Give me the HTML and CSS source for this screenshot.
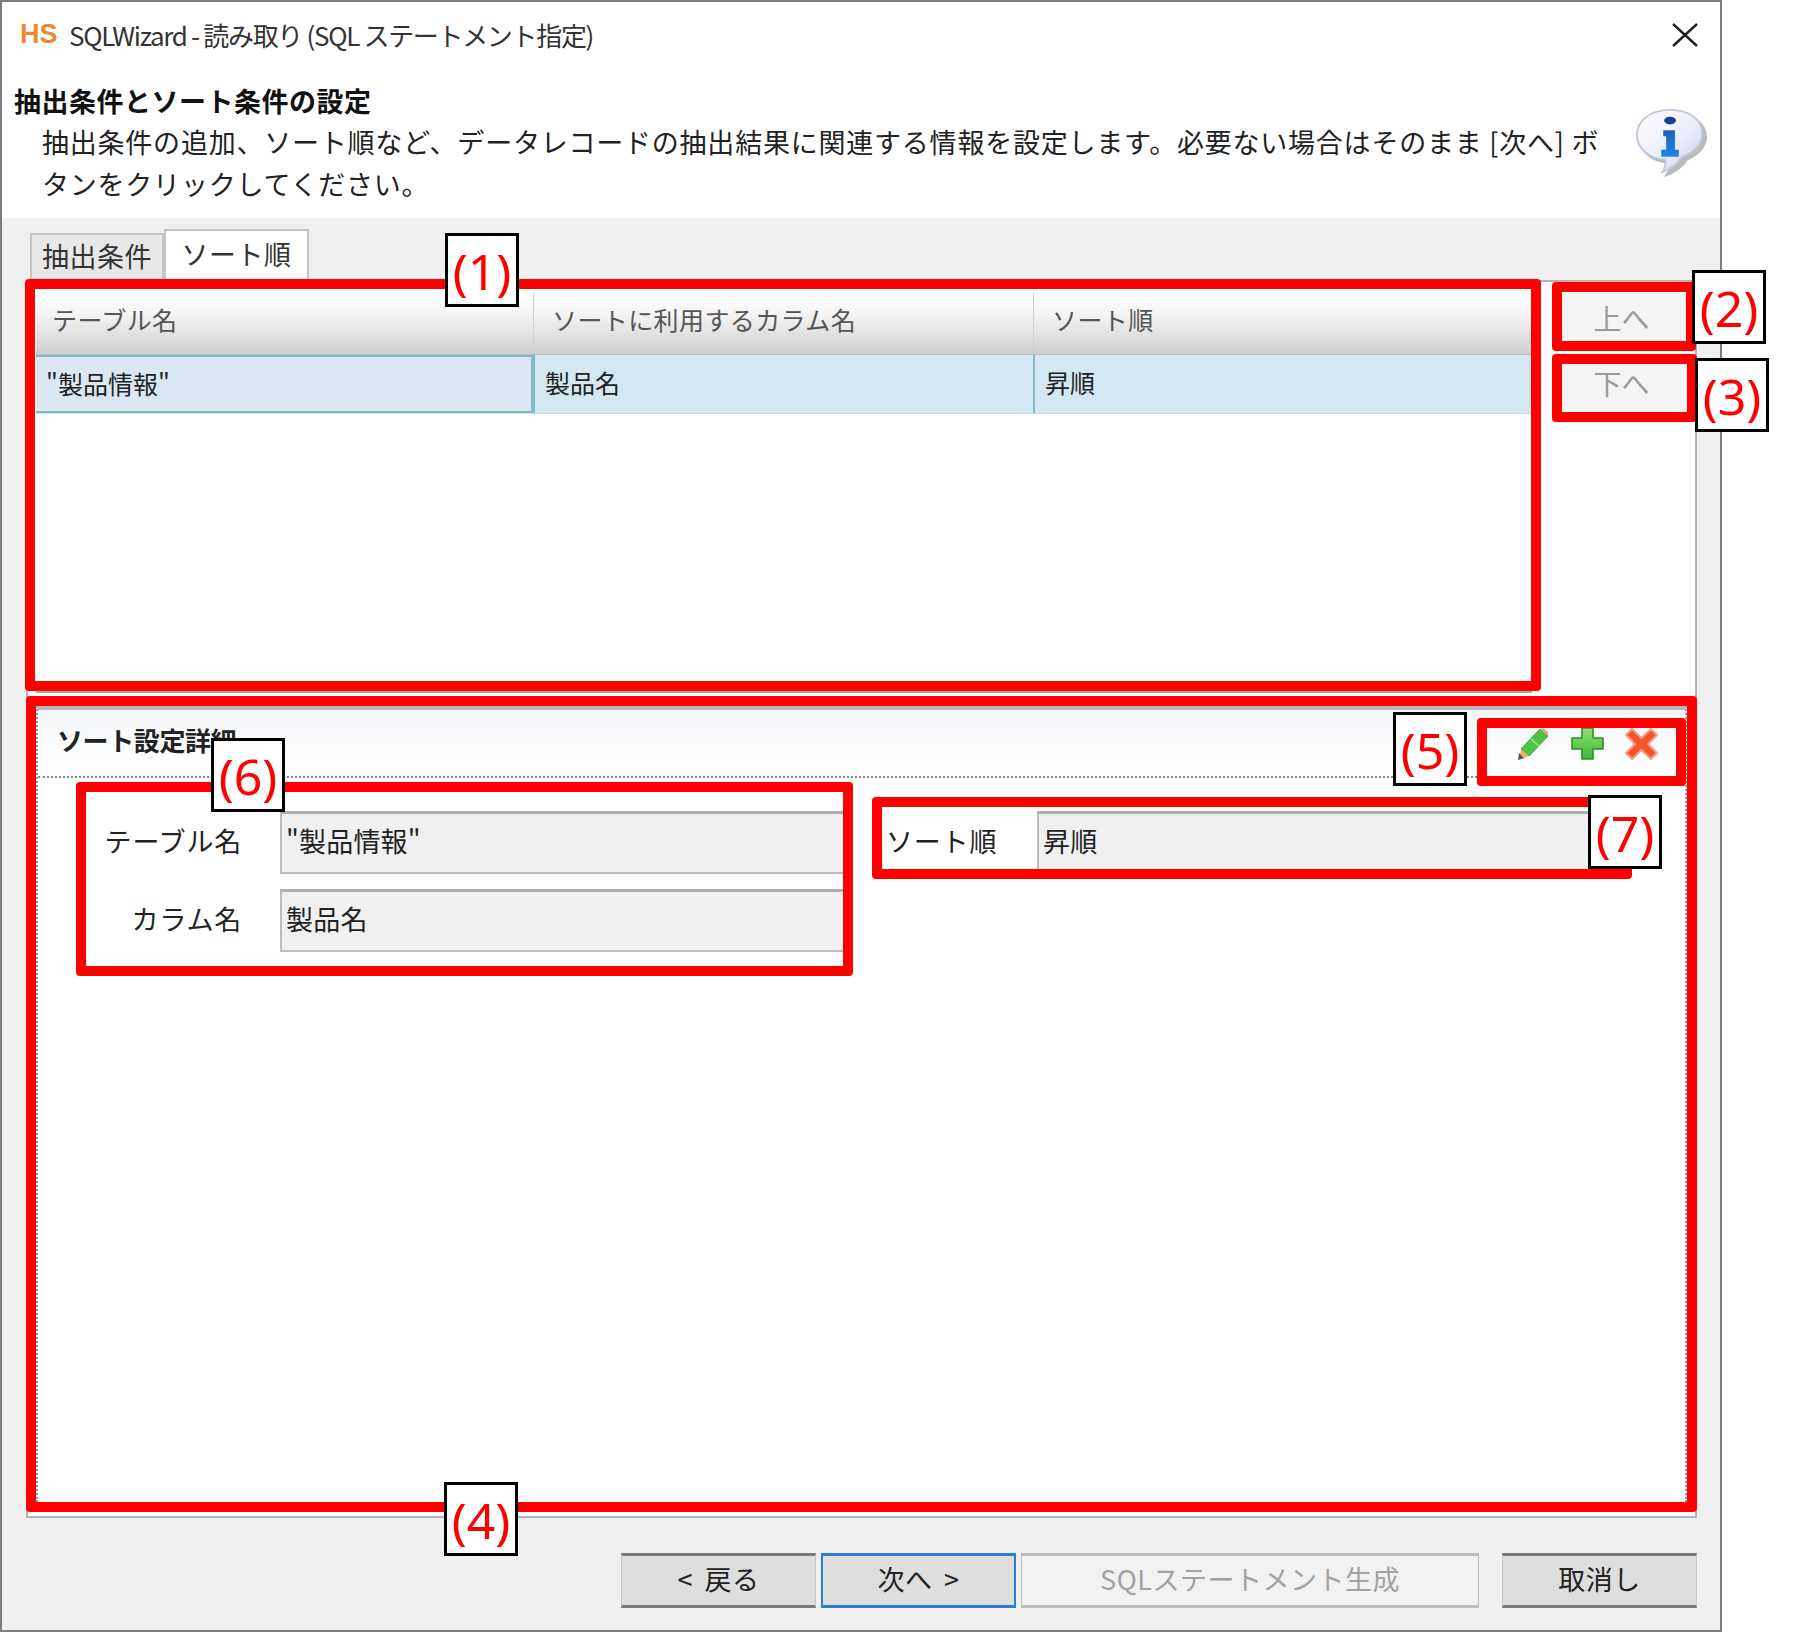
FILE: index.html
```html
<!DOCTYPE html>
<html lang="ja">
<head>
<meta charset="utf-8">
<title>SQLWizard</title>
<link rel="stylesheet" href="styles.css">
</head>
<body>
<div class="stage">
  <div class="window">
    <div class="titlebar">
      <span class="logo">HS</span>
      <span class="title">SQLWizard - 読み取り (SQL ステートメント指定)</span>
      <svg class="close" viewBox="0 0 26 24"><path d="M1 1L25 23M25 1L1 23" stroke="#222" stroke-width="2.4" fill="none"/></svg>
    </div>
    <div class="head">
      <div class="head-text">
        <div class="heading">抽出条件とソート条件の設定</div>
        <div class="desc">抽出条件の追加、ソート順など、データレコードの抽出結果に関連する情報を設定します。必要ない場合はそのまま [次へ] ボタンをクリックしてください。</div>
      </div>
      <svg class="info" viewBox="0 0 76 72">
        <defs>
          <linearGradient id="bub" x1="0" y1="0" x2="1" y2="1"><stop offset="0" stop-color="#ffffff"/><stop offset=".6" stop-color="#e9ebfa"/><stop offset="1" stop-color="#c8ccf0"/></linearGradient>
          <linearGradient id="ib" x1="0" y1="0" x2="0" y2="1"><stop offset="0" stop-color="#1c5fb8"/><stop offset="1" stop-color="#1e86e8"/></linearGradient>
        </defs>
        <path d="M38 4C17 4 3 15 3 30c0 14 13 25 30 26 1 5-1 10-5 14 9-2 19-8 25-17 10-5 20-13 20-24C73 14 59 4 38 4z" fill="#8c8c8c" opacity=".6" transform="translate(1 1)"/>
        <path d="M36 2C16 2 2 13 2 28c0 14 13 24 29 25 1 5 0 9-3 13 8-3 16-9 21-16 11-4 20-12 20-23C69 12 56 2 36 2z" fill="url(#bub)" stroke="#c4c7d4" stroke-width="2"/>
        <ellipse cx="36" cy="13" rx="6" ry="4" fill="#123f97"/>
        <path d="M29 23h12v20h4v7H27v-7h5V29h-3z" fill="url(#ib)"/>
      </svg>
    </div>
    <div class="body">
      <div class="tabs">
        <div class="tab">抽出条件</div>
        <div class="tab tab-active">ソート順</div>
      </div>
      <div class="tabpage">
        <div class="top-row">
          <div class="grid">
            <div class="grid-head">
              <div class="hcell">テーブル名</div>
              <div class="hcell">ソートに利用するカラム名</div>
              <div class="hcell">ソート順</div>
            </div>
            <div class="grid-row">
              <div class="cell cell-first">"製品情報"</div>
              <div class="cell">製品名</div>
              <div class="cell">昇順</div>
            </div>
          </div>
          <div class="move-btns">
            <div class="move-btn">上へ</div>
            <div class="move-btn move-btn-down">下へ</div>
          </div>
        </div>
        <div class="detail">
          <div class="detail-head">
            <span class="detail-title">ソート設定詳細</span>
            <div class="tools">
              <svg class="tool" viewBox="0 0 33 33">
                <path d="M23 2l8 7-19 20-8-7z" fill="#4cc444" stroke="#3a9a34" stroke-width="1"/>
                <path d="M14 12l8 7" stroke="#8ae07e" stroke-width="2" fill="none"/>
                <path d="M23 2l3-1 5 4v4z" fill="#f0a090"/>
                <path d="M4 22l8 7-10 4z" fill="#f0b070"/>
                <path d="M1 33l1-7 5 5z" fill="#555"/>
              </svg>
              <svg class="tool" viewBox="0 0 33 33">
                <defs><linearGradient id="pl" x1="0" y1="0" x2="0" y2="1"><stop offset="0" stop-color="#90e070"/><stop offset="1" stop-color="#3cb838"/></linearGradient></defs>
                <path d="M11 1h11v10h10v11H22v10H11V22H1V11h10z" fill="url(#pl)" stroke="#2d8f2d" stroke-width="1.6" stroke-linejoin="round"/>
              </svg>
              <svg class="tool" viewBox="0 0 33 33">
                <path d="M7 2l9.500 9L26 2l6 6-9 9 9 9-6 6-9.500-9L7 32l-6-6 9-9-9-9z" fill="#f4562a" stroke="#f0a08a" stroke-width="2" stroke-linejoin="round"/>
              </svg>
            </div>
          </div>
          <div class="form">
            <div class="form-label">テーブル名</div>
            <div class="field">"製品情報"</div>
            <div class="form-label form-label-left">ソート順</div>
            <div class="field">昇順</div>
            <div class="form-label">カラム名</div>
            <div class="field">製品名</div>
          </div>
        </div>
      </div>
      <div class="footer">
        <div class="btn">&lt; 戻る</div>
        <div class="btn btn-default">次へ &gt;</div>
        <div class="btn btn-disabled">SQLステートメント生成</div>
        <div class="btn btn-cancel">取消し</div>
      </div>
    </div>
  </div>

  <div class="mark mark-1"></div>
  <div class="mark mark-2"></div>
  <div class="mark mark-3"></div>
  <div class="mark mark-4"></div>
  <div class="mark mark-5"></div>
  <div class="mark mark-6"></div>
  <div class="mark mark-7"></div>
  <div class="tag tag-1">(1)</div>
  <div class="tag tag-2">(2)</div>
  <div class="tag tag-3">(3)</div>
  <div class="tag tag-4">(4)</div>
  <div class="tag tag-5">(5)</div>
  <div class="tag tag-6">(6)</div>
  <div class="tag tag-7">(7)</div>
</div>
</body>
</html>
```
FILE: styles.css
```css
* { box-sizing: border-box; }
html, body { margin: 0; padding: 0; background: #fff; }
body { font-family: "Noto Sans CJK JP", "Noto Sans", sans-serif; color: #222; font-size: 27px; }
.stage { position: relative; width: 1797px; height: 1633px; overflow: hidden; }

.window { width: 1722px; height: 1632px; border: 2px solid #7d7d7d; display: flex; flex-direction: column; background: #fff; }

.titlebar { height: 66px; display: flex; align-items: center; padding-left: 18px; padding-right: 22px; flex: none; }
.logo { font-family: "Liberation Sans", sans-serif; font-weight: 700; font-size: 27px; color: #ee8a2d; width: 49px; flex: none; padding-bottom: 2px; }
.title { font-size: 26px; color: #333; flex: 1; letter-spacing: -1.32px; padding-bottom: 2px; }
.close { width: 26px; height: 24px; flex: none; }

.head { height: 150px; flex: none; display: flex; padding-top: 14px; padding-left: 12px; position: relative; }
.head-text { width: 1600px; flex: none; }
.heading { font-weight: 700; line-height: 38px; font-size: 27px; color: #111; letter-spacing: 0.5px; }
.desc { padding-left: 28px; line-height: 42px; font-size: 27px; color: #222; letter-spacing: 0.78px; padding-top: 1px; }
.info { width: 74px; height: 72px; flex: none; margin-left: 21px; margin-top: 25px; }

.body { flex: 1; background: #f0f0f0; padding: 11px 23px 0 24px; display: flex; flex-direction: column; }
.tabs { display: flex; height: 51px; padding-left: 4px; align-items: flex-end; flex: none; }
.tab { width: 134px; height: 47px; background: #e8e8e8; border: 2px solid #c4c4c4; border-bottom: 0; text-align: center; line-height: 42px; font-size: 27px; color: #333; letter-spacing: 0.5px; }
.tab-active { width: 145px; height: 51px; background: #fff; line-height: 46px; }

.tabpage { height: 1238px; flex: none; background: #fff; border: 2px solid #b4b4b4; padding: 11px 8px 14px 8px; display: flex; flex-direction: column; }
.top-row { display: flex; height: 400px; flex: none; gap: 24px; }
.grid { flex: 1; border-bottom: 3px solid #a8a8a8; background: #fff; }
.grid-head { display: grid; grid-template-columns: 497px 500px 1fr; height: 62px; background: linear-gradient(#ffffff, #f4f4f4 35%, #cfcfcf); border-bottom: 1px solid #bbb; }
.hcell { padding-left: 18px; line-height: 52px; font-size: 25px; color: #555; border-left: 1px solid #d0d0d0; letter-spacing: 0.4px; }
.hcell:first-child { padding-left: 16px; border-left: 0; }
.grid-row { display: grid; grid-template-columns: 497px 500px 1fr; height: 59px; background: #d4e8f2; border-bottom: 1px solid #c6dfec; }
.cell { padding-left: 10px; line-height: 54px; font-size: 25px; color: #222; border-left: 2px solid #7fbace; }
.cell-first { background: #dbe7f3; border: 2px solid #7fbace; border-left: 0; padding-left: 10px; line-height: 52px; }
.cell:last-child { border-left: 2px solid #7fbace; }
.move-btns { width: 131px; flex: none; display: flex; flex-direction: column; gap: 10px; }
.move-btn { height: 57px; background: #f4f4f4; border-bottom: 3px solid #bcbcbc; color: #9a9a9a; font-size: 28px; text-align: center; line-height: 50px; }
.move-btn-down { line-height: 46px; }

.detail { flex: 1; margin-top: 13px; border-top: 4px solid #b0b8bd; border-left: 2px dotted #999; border-right: 2px dotted #999; display: flex; flex-direction: column; }
.detail-head { height: 68px; flex: none; display: flex; align-items: center; justify-content: space-between; padding-left: 19px; padding-right: 27px; background: linear-gradient(#f4f6f9, #ffffff); border-bottom: 2px dotted #888; }
.detail-title { font-weight: 700; font-size: 26px; color: #222; padding-bottom: 7px; letter-spacing: -0.4px; }
.tools { display: flex; gap: 21px; }
.tool { width: 33px; height: 33px; display: block; }

.form { display: grid; grid-template-columns: 202px 568px 109px 589px; grid-auto-rows: 63px; column-gap: 40px; row-gap: 15px; padding-top: 33px; }
.form-label { text-align: right; font-size: 27px; line-height: 60px; color: #222; letter-spacing: 0.8px; white-space: nowrap; margin-right: -2px; }
.form-label-left { text-align: left; margin-left: -2px; margin-right: 0; }
.field { background: #f0f0f0; border-top: 3px solid #aeaeae; border-left: 2px solid #bcbcbc; border-bottom: 2px solid #bcbcbc; padding-left: 4px; line-height: 54px; font-size: 27px; color: #222; letter-spacing: 0.2px; }

.footer { display: flex; justify-content: flex-end; height: 55px; margin-top: 35px; gap: 5px; flex: none; }
.btn { width: 195px; height: 55px; background: #dedede; border: 1px solid #c8c8c8; border-top: 3px solid #7a7a7a; border-bottom: 3px solid #7a7a7a; text-align: center; line-height: 46px; font-size: 27px; color: #222; word-spacing: 5px; letter-spacing: 0.5px; }
.btn-default { border-color: #2a7fd0; border-width: 2px; border-top-width: 3px; border-bottom-width: 3px; }
.btn-disabled { width: 458px; background: #f2f2f2; border-color: #bdbdbd; color: #a2a2a2; }
.btn-cancel { margin-left: 18px; }

.mark { position: absolute; border: 10px solid #f00; border-radius: 4px; }
.mark-1 { left: 25px; top: 279px; width: 1516px; height: 412px; }
.mark-2 { left: 1552px; top: 282px; width: 144px; height: 69px; }
.mark-3 { left: 1552px; top: 354px; width: 145px; height: 68px; }
.mark-4 { left: 26px; top: 696px; width: 1671px; height: 816px; }
.mark-5 { left: 1477px; top: 718px; width: 209px; height: 68px; }
.mark-6 { left: 76px; top: 782px; width: 777px; height: 194px; }
.mark-7 { left: 872px; top: 797px; width: 760px; height: 82px; }

.tag { position: absolute; width: 74px; height: 74px; background: #fff; border: 3px solid #000; color: #f00; font-family: "Noto Sans", sans-serif; font-size: 50px; line-height: 70px; text-align: center; }
.tag-1 { left: 445px; top: 233px; }
.tag-2 { left: 1692px; top: 270px; }
.tag-3 { left: 1695px; top: 358px; }
.tag-4 { left: 444px; top: 1482px; }
.tag-5 { left: 1393px; top: 712px; }
.tag-6 { left: 211px; top: 738px; }
.tag-7 { left: 1588px; top: 795px; }
```
